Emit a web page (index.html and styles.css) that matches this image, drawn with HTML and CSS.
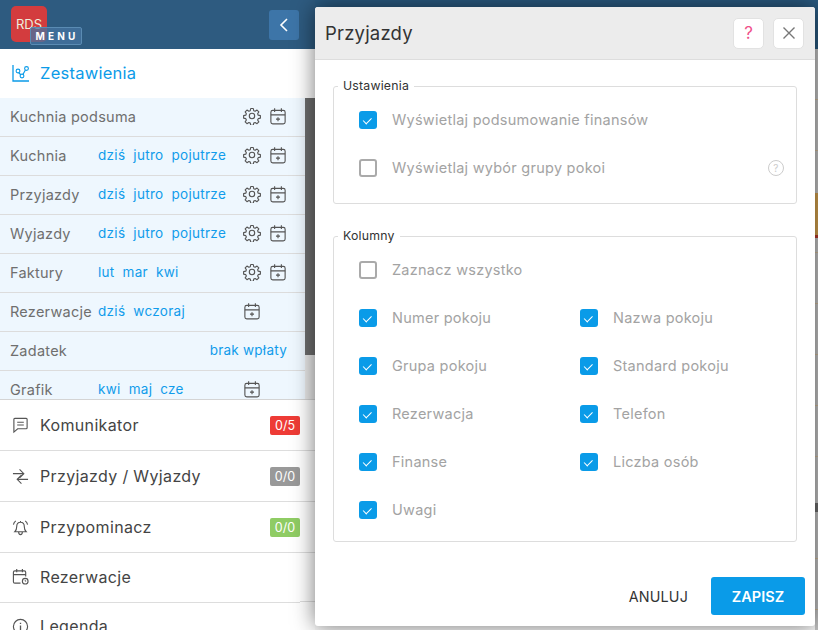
FILE: index.html
```html
<!DOCTYPE html>
<html lang="pl">
<head>
<meta charset="utf-8">
<title>Przyjazdy</title>
<link rel="stylesheet" href="styles.css">
</head>
<body>
<svg class="sprite" width="0" height="0">
  <symbol id="gear" viewBox="0 0 24 24"><path d="M10.300 2h3.400l.6 2.900 1.900.8 2.500-1.600 2.400 2.400-1.600 2.500.8 1.900 2.900.6v3.400l-2.900.6-.8 1.900 1.600 2.500-2.400 2.400-2.500-1.600-1.900.8-.6 2.900h-3.400l-.6-2.900-1.900-.8-2.500 1.600-2.400-2.400 1.600-2.500-.8-1.900-2.900-.6v-3.400l2.900-.6.8-1.900-1.600-2.500 2.400-2.400 2.500 1.600 1.900-.8z" fill="none" stroke="currentColor" stroke-width="1.500" stroke-linejoin="round"/><circle cx="12" cy="12" r="3.600" fill="none" stroke="currentColor" stroke-width="1.500"/></symbol>
  <symbol id="cal" viewBox="0 0 24 24"><rect x="2.500" y="4.500" width="19" height="18" rx="2.500" fill="none" stroke="currentColor" stroke-width="1.500"/><path d="M2.500 10.500h19M7.500 1.500v5M16.500 1.500v5M12 13.500v5.500M9.300 16.200h5.400" fill="none" stroke="currentColor" stroke-width="1.500"/></symbol>
</svg>

<div class="page">
  <aside class="side">
    <header class="side-top">
      <div class="logo">RDS<span class="menu-tag">MENU</span></div>
      <button class="back" type="button"><svg width="10" height="16" viewBox="0 0 10 16"><path d="M8 2 2 8l6 6" fill="none" stroke="#fff" stroke-width="1.600"/></svg></button>
    </header>
    <div class="section-head">
      <svg class="ic-chart" width="18" height="18" viewBox="0 0 18 18"><path d="M1 1v16h16" fill="none" stroke="#0b9be8" stroke-width="1.300"/><path d="M6 8 10 12 14 5" fill="none" stroke="#0b9be8" stroke-width="1.200"/><circle cx="6" cy="7" r="1.900" fill="#fff" stroke="#0b9be8" stroke-width="1.100"/><circle cx="10" cy="12" r="1.900" fill="#fff" stroke="#0b9be8" stroke-width="1.100"/><circle cx="14.500" cy="4.500" r="1.900" fill="#fff" stroke="#0b9be8" stroke-width="1.100"/></svg>
      <span>Zestawienia</span>
    </div>
    <div class="list-wrap">
      <ul class="list">
        <li class="row"><span class="name">Kuchnia podsuma</span><span class="links"></span><span class="icons"><svg class="i"><use href="#gear"/></svg><svg class="i"><use href="#cal"/></svg></span></li>
        <li class="row"><span class="name">Kuchnia</span><span class="links"><a>dziś</a><a>jutro</a><a>pojutrze</a></span><span class="icons"><svg class="i"><use href="#gear"/></svg><svg class="i"><use href="#cal"/></svg></span></li>
        <li class="row"><span class="name">Przyjazdy</span><span class="links"><a>dziś</a><a>jutro</a><a>pojutrze</a></span><span class="icons"><svg class="i"><use href="#gear"/></svg><svg class="i"><use href="#cal"/></svg></span></li>
        <li class="row"><span class="name">Wyjazdy</span><span class="links"><a>dziś</a><a>jutro</a><a>pojutrze</a></span><span class="icons"><svg class="i"><use href="#gear"/></svg><svg class="i"><use href="#cal"/></svg></span></li>
        <li class="row"><span class="name">Faktury</span><span class="links"><a>lut</a><a>mar</a><a>kwi</a></span><span class="icons"><svg class="i"><use href="#gear"/></svg><svg class="i"><use href="#cal"/></svg></span></li>
        <li class="row"><span class="name">Rezerwacje</span><span class="links"><a>dziś</a><a>wczoraj</a></span><span class="icons one"><svg class="i"><use href="#cal"/></svg></span></li>
        <li class="row"><span class="name">Zadatek</span><span class="links end"><a>brak wpłaty</a></span></li>
        <li class="row"><span class="name">Grafik</span><span class="links"><a>kwi</a><a>maj</a><a>cze</a></span><span class="icons one"><svg class="i"><use href="#cal"/></svg></span></li>
      </ul>
      <div class="scrollbar"></div>
    </div>
    <nav class="nav">
      <div class="nav-row wide">
        <svg class="n" viewBox="0 0 18 18"><path d="M2 2.500q0-1 1-1h12q1 0 1 1v9q0 1-1 1H6l-4 3.500zM5.500 5.500h7M5.500 8.500h7" fill="none" stroke="#555" stroke-width="1.200"/></svg>
        <span class="nav-label">Komunikator</span><span class="badge red">0/5</span>
      </div>
      <div class="nav-row wide">
        <svg class="n" viewBox="0 0 18 18"><path d="M1 6h11M8 1.500 12.500 6 8 10.500M17 12H6M10 7.500 5.500 12l4.500 4.500" fill="none" stroke="#555" stroke-width="1.200"/></svg>
        <span class="nav-label">Przyjazdy / Wyjazdy</span><span class="badge grey">0/0</span>
      </div>
      <div class="nav-row wide">
        <svg class="n" viewBox="0 0 18 18"><path d="M3 13.500q2-2 2-5.500 0-4.500 4-4.500t4 4.500q0 3.500 2 5.500zM7 13.500q0 3 2 3t2-3M9 2v1.500M1.500 6Q2 3.500 4 2M16.500 6Q16 3.500 14 2" fill="none" stroke="#555" stroke-width="1.200"/></svg>
        <span class="nav-label">Przypominacz</span><span class="badge green">0/0</span>
      </div>
      <div class="nav-row short">
        <svg class="n" viewBox="0 0 18 18"><path d="M9 16H3q-1.500 0-1.500-1.500v-10Q1.500 3 3 3h10q1.500 0 1.500 1.500V9M1.500 7h13M5 1v3.500M11 1v3.500" fill="none" stroke="#555" stroke-width="1.200"/><circle cx="14" cy="14" r="3" fill="none" stroke="#555" stroke-width="1.200"/><path d="M14 12.500V14h1" fill="none" stroke="#555" stroke-width=".9"/></svg>
        <span class="nav-label">Rezerwacje</span>
      </div>
      <div class="nav-row short last">
        <svg class="n" viewBox="0 0 18 18"><circle cx="9" cy="9" r="7.500" fill="none" stroke="#555" stroke-width="1.200"/><path d="M9 8v5M9 5v1.400" fill="none" stroke="#555" stroke-width="1.400"/></svg>
        <span class="nav-label">Legenda</span>
      </div>
    </nav>
  </aside>

  <main class="backdrop">
    <div class="strip"><i class="s-a"></i><i class="s-b"></i><i class="s-c"></i></div>
    <section class="modal">
      <header class="modal-head">
        <h1>Przyjazdy</h1>
        <button class="sq pink" type="button">?</button>
        <button class="sq" type="button"><svg width="14" height="14" viewBox="0 0 14 14"><path d="M1.500 1.500l11 11M12.500 1.500l-11 11" fill="none" stroke="#777" stroke-width="1.400"/></svg></button>
      </header>
      <div class="modal-body">
        <fieldset class="box settings">
          <legend>Ustawienia</legend>
          <div class="opt"><span class="cb on"></span><span class="lbl">Wyświetlaj podsumowanie finansów</span></div>
          <div class="opt"><span class="cb"></span><span class="lbl">Wyświetlaj wybór grupy pokoi</span><span class="help">?</span></div>
        </fieldset>
        <fieldset class="box cols">
          <legend>Kolumny</legend>
          <div class="grid">
            <div class="opt full"><span class="cb"></span><span class="lbl">Zaznacz wszystko</span></div>
            <div class="opt"><span class="cb on"></span><span class="lbl">Numer pokoju</span></div>
            <div class="opt"><span class="cb on"></span><span class="lbl">Nazwa pokoju</span></div>
            <div class="opt"><span class="cb on"></span><span class="lbl">Grupa pokoju</span></div>
            <div class="opt"><span class="cb on"></span><span class="lbl">Standard pokoju</span></div>
            <div class="opt"><span class="cb on"></span><span class="lbl">Rezerwacja</span></div>
            <div class="opt"><span class="cb on"></span><span class="lbl">Telefon</span></div>
            <div class="opt"><span class="cb on"></span><span class="lbl">Finanse</span></div>
            <div class="opt"><span class="cb on"></span><span class="lbl">Liczba osób</span></div>
            <div class="opt"><span class="cb on"></span><span class="lbl">Uwagi</span></div>
          </div>
        </fieldset>
        <footer class="actions">
          <button class="cancel" type="button">ANULUJ</button>
          <button class="save" type="button">ZAPISZ</button>
        </footer>
      </div>
    </section>
  </main>
</div>
</body>
</html>
```
FILE: styles.css
```css
* { box-sizing: border-box; }
html, body { margin: 0; padding: 0; height: 100%; overflow: hidden; }
body { font-family: "Inter", "Noto Sans", sans-serif; color: #444; background: #fff; }
.sprite { position: absolute; }
button { font-family: inherit; border: 0; padding: 0; cursor: pointer; }
ul { list-style: none; margin: 0; padding: 0; }

.page { display: flex; width: 818px; height: 630px; overflow: hidden; position: relative; }

.side { width: 315px; flex: none; display: flex; flex-direction: column; height: 630px; }
.side-top { height: 49px; flex: none; background: #2e5b80; display: flex; justify-content: space-between; align-items: center; padding: 0 16px 0 11px; }
.logo { position: relative; width: 36px; height: 36px; margin-top: -1px; border-radius: 5px; background: #d33c3e; color: #eed; font-size: 13px; line-height: 36px; padding-left: 5px; }
.menu-tag { position: absolute; left: 19px; top: 21px; width: 52px; height: 18px; border: 1px solid #5a8bb3; border-radius: 2px; background: rgba(70,115,160,.75); color: #fff; font-size: 10px; font-weight: 700; line-height: 16px; letter-spacing: 3.200px; text-align: center; padding-left: 2px; }
.back { width: 30px; height: 30px; background: #3d75a8; border-radius: 3px; display: flex; align-items: center; justify-content: center; }

.section-head { height: 49px; flex: none; display: flex; align-items: center; gap: 10px; padding: 0 0 2px 12px; font-size: 16.500px; letter-spacing: .25px; color: #0b9be8; }

.list-wrap { flex: none; height: 302px; display: flex; overflow: hidden; background: #eaeaea; border-bottom: 1px solid #d4d4d4; }
.list { width: 305px; background: #eef7fe; flex: none; }
.scrollbar { width: 10px; height: 257px; background: #6e6e6e; flex: none; }
.row { height: 39px; border-bottom: 1px solid #dcdcdc; display: flex; align-items: center; padding: 0 0 2px 10px; font-size: 14.500px; color: #6f6f6f; }
.name { width: 88px; flex: none; white-space: nowrap; letter-spacing: .25px; }
.links { display: flex; gap: 8px; font-size: 13.500px; letter-spacing: .3px; color: #119ceb; flex: 1; }
.links.end { justify-content: flex-end; padding-right: 18px; letter-spacing: .25px; }
.icons { display: flex; gap: 8px; padding-right: 18px; color: #555; }
.icons.one { padding-right: 44px; }
.i { width: 18px; height: 18px; display: block; }

.nav { flex: 1; background: #fff; }
.nav-row { position: relative; display: flex; align-items: center; padding-left: 12px; font-size: 16px; color: #444; border-bottom: 1px solid #ddd; }
.nav-row.wide { height: 51px; padding-right: 15px; }
.nav-row.short { height: 50px; width: 300px; padding-bottom: 2px; }
.nav-row.short::after { content: ""; position: absolute; left: 300px; bottom: 0; width: 15px; height: 1px; background: #ddd; }
.nav-row.last { border-bottom: 0; padding-bottom: 4px; }
.nav-row.last::after { display: none; }
.n { width: 17px; height: 17px; flex: none; margin-right: 11px; }
.nav-label { flex: 1; letter-spacing: .35px; }
.badge { width: 30px; height: 19px; border-radius: 2px; color: #fff; font-size: 12.500px; line-height: 19px; text-align: center; }
.red { background: #ee3b36; }
.grey { background: #999; }
.green { background: #8fcc64; }

.backdrop { position: relative; flex: 1; background: #fbfbfb; }
.backdrop::before { content: ""; display: block; height: 49px; background: #2a5a80; }
.strip { position: absolute; right: 0; top: 49px; width: 3px; bottom: 0; background: repeating-linear-gradient(to bottom, #c4c4c4 0, #c4c4c4 50px, #cdb898 50px, #cdb898 51px); }
.strip i { position: absolute; left: 0; width: 3px; display: block; }
.s-a { top: 144px; height: 42px; background: #d4a24e; }
.s-b { top: 186px; height: 3px; background: #b9382d; }
.s-c { top: 454px; height: 9px; background: #6e6e6e; }

.modal { position: absolute; left: 0; top: 7px; width: 500px; height: 619px; background: #fff; border-radius: 3px; box-shadow: 0 0 22px rgba(0,0,0,.55); display: flex; flex-direction: column; }
.modal-head { height: 53px; flex: none; background: #ececec; border-bottom: 1px solid #ddd; display: flex; align-items: center; gap: 9px; padding: 0 11px 0 10px; border-radius: 3px 3px 0 0; }
.modal-head h1 { flex: 1; margin: 0; font-size: 18.500px; font-weight: 400; color: #333; letter-spacing: .2px; }
.sq { width: 31px; height: 31px; background: #fff; border: 1px solid #e2e2e2; border-radius: 5px; display: flex; align-items: center; justify-content: center; }
.pink { color: #f0508a; font-size: 17px; }

.modal-body { flex: 1; padding: 0 18px; display: flex; flex-direction: column; }
.box { border: 1px solid #ddd; border-radius: 3px; margin: 0; padding: 0; min-width: 0; }
.box legend { margin-left: -21px; padding: 0 5px; font-size: 12.300px; color: #333; line-height: 14px; letter-spacing: .2px; }
.settings { margin-top: 19px; height: 125px; padding: 3px 12px 0 25px; }
.cols { margin-top: 25px; height: 313px; padding: 3px 12px 0 25px; }
.opt { height: 48px; display: flex; align-items: center; font-size: 14.500px; color: #a3a3a3; letter-spacing: .25px; }
.lbl { padding-bottom: 2px; }
.cb { width: 18px; height: 18px; flex: none; margin-right: 15px; border: 2px solid #aaa; border-radius: 3px; display: flex; align-items: center; justify-content: center; }
.cb.on { background: #0a9be8; border: 0; }
.cb.on::after { content: ""; width: 7px; height: 4px; border-left: 1.500px solid #fff; border-bottom: 1.500px solid #fff; transform: rotate(-45deg) translate(0, -1px); }
.help { margin-left: auto; width: 16px; height: 16px; border: 1px solid #ccc; border-radius: 50%; color: #ccc; font-size: 10px; line-height: 14px; text-align: center; }
.grid { display: grid; grid-template-columns: 221px 1fr; }
.full { grid-column: 1 / -1; }
.actions { display: flex; justify-content: flex-end; align-items: center; gap: 23px; margin: 35px -8px 0 0; }
.cancel { background: none; font-size: 14.300px; color: #333; letter-spacing: .2px; }
.save { width: 94px; height: 38px; background: #0a9be8; border-radius: 3px; color: #fff; font-size: 14.500px; font-weight: 600; }
```
